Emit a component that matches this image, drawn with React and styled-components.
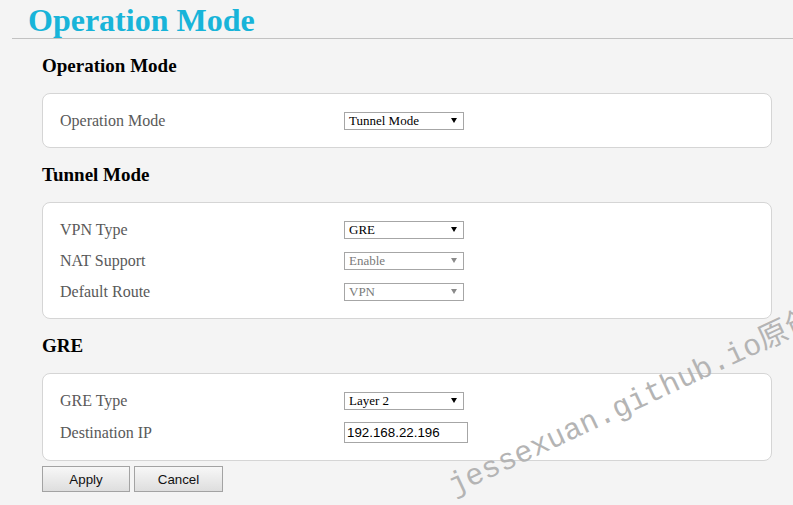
import React from "react";
import styled, { createGlobalStyle } from "styled-components";

const Global = createGlobalStyle`
  html, body {
    margin: 0;
    padding: 0;
    background: #f4f4f4;
    overflow: hidden;
  }
  body {
    font-family: "Liberation Serif", "Times New Roman", serif;
  }
`;

const Page = styled.div`
  position: relative;
  width: 793px;
  height: 505px;
  background: #f4f4f4;
  overflow: hidden;
`;

const Header = styled.header`
  margin-left: 12px;
  padding: 2px 0 0 16px;
  border-bottom: 1px solid #c2c2c2;
`;

const Title = styled.h1`
  margin: 0;
  font-family: "Liberation Serif", "Times New Roman", serif;
  font-size: 32px;
  line-height: 36px;
  font-weight: bold;
  color: #18b4d9;
`;

const Content = styled.main`
  padding: 0 21px 0 42px;
  display: flex;
  flex-direction: column;
`;

const SectionTitle = styled.h3`
  margin: 16px 0;
  font-family: "Liberation Serif", "Times New Roman", serif;
  font-size: 19px;
  line-height: 22px;
  font-weight: bold;
  color: #000;
`;

const Card = styled.div`
  background: #fff;
  border: 1px solid #d5d5d5;
  border-radius: 8px;
  padding: 11px 0 11px 17px;
`;

const Row = styled.div`
  display: grid;
  grid-template-columns: 284px auto;
  align-items: center;
  height: ${(p) => (p.$tall ? 33 : 31)}px;
`;

const Label = styled.span`
  font-family: "Liberation Serif", "Times New Roman", serif;
  font-size: 16px;
  line-height: 18px;
  color: #595959;
`;

const SelectBox = styled.div`
  box-sizing: border-box;
  width: 120px;
  height: 18px;
  border: 1px solid #a6a6a6;
  background: #fff;
  display: flex;
  align-items: center;
  justify-content: space-between;
  padding: 0 6px 0 4px;
  font-family: "Liberation Serif", "Times New Roman", serif;
  font-size: 13px;
  color: ${(p) => (p.$disabled ? "#7a7a7a" : "#000")};
`;

const Arrow = styled.svg`
  width: 6px;
  height: 5px;
  fill: ${(p) => (p.$disabled ? "#8a8a8a" : "#000")};
`;

const TextInput = styled.input`
  box-sizing: border-box;
  width: 124px;
  height: 21px;
  border: 1px solid #a6a6a6;
  background: #fff;
  padding: 0 2px;
  margin: 0;
  font-family: "Liberation Sans", Arial, sans-serif;
  font-size: 13.33px;
  color: #000;
  outline: none;
`;

const ButtonBar = styled.div`
  display: flex;
  gap: 4px;
  margin-top: 5px;
`;

const Button = styled.button`
  box-sizing: border-box;
  width: ${(p) => p.$w}px;
  height: 26px;
  margin: 0;
  padding: 0;
  border: 1px solid #a3a3a3;
  background: linear-gradient(#f7f7f7, #dedede);
  font-family: "Liberation Sans", Arial, sans-serif;
  font-size: 13.33px;
  color: #111;
`;

const Watermark = styled.div`
  position: absolute;
  left: 444px;
  top: 474px;
  transform-origin: 0 0;
  transform: rotate(-25deg);
  white-space: nowrap;
  font-family: "Liberation Mono", "Noto Sans CJK SC", monospace;
  font-size: 30px;
  line-height: 30px;
  color: #b4b4b4;
  pointer-events: none;
`;

function Select({ value, disabled }) {
  return (
    <SelectBox $disabled={disabled}>
      <span>{value}</span>
      <Arrow $disabled={disabled} viewBox="0 0 6 5">
        <polygon points="0,0 6,0 3,5" />
      </Arrow>
    </SelectBox>
  );
}

export default function App() {
  return (
    <Page>
      <Global />
      <Header>
        <Title>Operation Mode</Title>
      </Header>
      <Content>
        <SectionTitle>Operation Mode</SectionTitle>
        <Card>
          <Row>
            <Label>Operation Mode</Label>
            <Select value="Tunnel Mode" />
          </Row>
        </Card>

        <SectionTitle>Tunnel Mode</SectionTitle>
        <Card>
          <Row>
            <Label>VPN Type</Label>
            <Select value="GRE" />
          </Row>
          <Row>
            <Label>NAT Support</Label>
            <Select value="Enable" disabled />
          </Row>
          <Row>
            <Label>Default Route</Label>
            <Select value="VPN" disabled />
          </Row>
        </Card>

        <SectionTitle>GRE</SectionTitle>
        <Card>
          <Row>
            <Label>GRE Type</Label>
            <Select value="Layer 2" />
          </Row>
          <Row $tall>
            <Label>Destination IP</Label>
            <TextInput defaultValue="192.168.22.196" />
          </Row>
        </Card>

        <ButtonBar>
          <Button $w={88}>Apply</Button>
          <Button $w={89}>Cancel</Button>
        </ButtonBar>
      </Content>
      <Watermark>jessexuan.github.io原创</Watermark>
    </Page>
  );
}
